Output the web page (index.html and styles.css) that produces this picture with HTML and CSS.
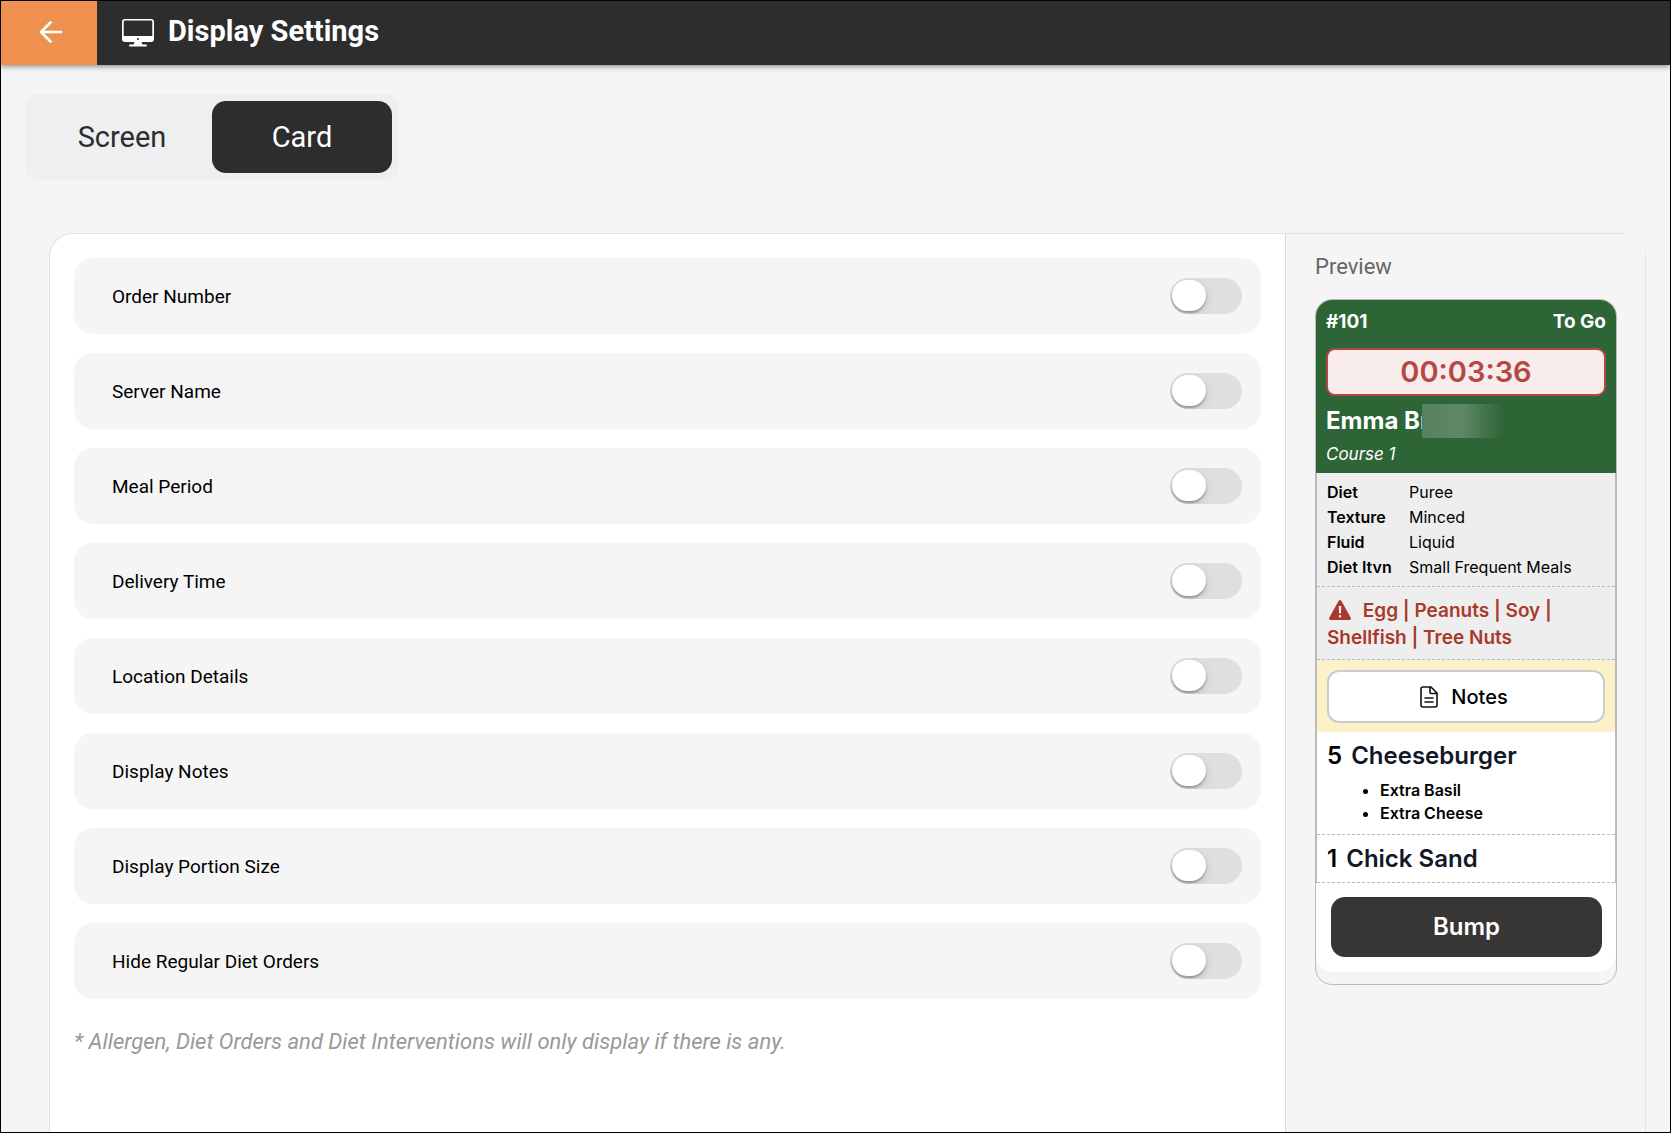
FILE: index.html
```
<!DOCTYPE html>
<html lang="en">
<head>
    <meta charset="UTF-8">
    <meta name="viewport" content="width=device-width, initial-scale=1.0">
    <title>Display Settings</title>
    <link rel="stylesheet" href="styles.css">
</head>
<body>
    <header class="topbar">
        <button type="button" class="back" aria-label="Back">
            <svg width="24" height="22" viewBox="0 0 24 22" fill="none" stroke="#fff" stroke-width="2.600" stroke-linecap="round" stroke-linejoin="round">
                <path d="M22 11H2.500M11.500 1.500L2 11l9.500 9.500"/>
            </svg>
        </button>
        <svg class="monitor" width="32" height="28" viewBox="0 0 32 28">
            <path fill="#fff" fill-rule="evenodd" d="M3 0h26a3 3 0 0 1 3 3v17a3 3 0 0 1-3 3H19.500l1 2.500H24a1 1 0 0 1 0 2H8a1 1 0 0 1 0-2h3.500l1-2.500H3a3 3 0 0 1-3-3V3a3 3 0 0 1 3-3zM3 1.500A1.300 1.300 0 0 0 1.700 3v14h28.600V3A1.300 1.300 0 0 0 29 1.500zM16 19a1 1 0 1 0 0 2 1 1 0 0 0 0-2z"/>
        </svg>
        <h1>Display Settings</h1>
    </header>

    <main>
        <div class="tabs">
            <button type="button" class="tab">Screen</button>
            <button type="button" class="tab active">Card</button>
        </div>

        <div class="panel">
            <section class="settings">
                <label class="setting">Order Number <input type="checkbox" class="toggle"></label>
                <label class="setting">Server Name <input type="checkbox" class="toggle"></label>
                <label class="setting">Meal Period <input type="checkbox" class="toggle"></label>
                <label class="setting">Delivery Time <input type="checkbox" class="toggle"></label>
                <label class="setting">Location Details <input type="checkbox" class="toggle"></label>
                <label class="setting">Display Notes <input type="checkbox" class="toggle"></label>
                <label class="setting">Display Portion Size <input type="checkbox" class="toggle"></label>
                <label class="setting">Hide Regular Diet Orders <input type="checkbox" class="toggle"></label>
                <p class="hint">* Allergen, Diet Orders and Diet Interventions will only display if there is any.</p>
            </section>

            <aside class="preview">
                <h2>Preview</h2>
                <div class="card">
                    <div class="card-head">
                        <div class="order">
                            <span>#101</span>
                            <span>To Go</span>
                        </div>
                        <div class="timer">00:03:36</div>
                        <div class="guest"><span class="guest-name">Emma Br</span></div>
                        <div class="course">Course 1</div>
                    </div>
                    <div class="card-body">
                        <dl class="diet">
                            <dt>Diet</dt><dd>Puree</dd>
                            <dt>Texture</dt><dd>Minced</dd>
                            <dt>Fluid</dt><dd>Liquid</dd>
                            <dt>Diet Itvn</dt><dd>Small Frequent Meals</dd>
                        </dl>
                        <div class="allergens">
                            <svg width="22" height="20" viewBox="0 0 22 20">
                                <path fill="#a83a2c" fill-rule="evenodd" d="M9.700.8a1.500 1.500 0 0 1 2.600 0l9.500 16.900A1.500 1.500 0 0 1 20.500 20h-19a1.500 1.500 0 0 1-1.300-2.300zM9.700 6l.4 7.500h1.800l.4-7.500zM11 15a1.300 1.300 0 1 0 0 2.600 1.300 1.300 0 0 0 0-2.600z"/>
                            </svg>
                            Egg | Peanuts | Soy | Shellfish | Tree Nuts
                        </div>
                        <div class="notes">
                            <button type="button" class="notes-btn">
                                <svg width="18" height="22" viewBox="0 0 18 22" fill="none" stroke="#111" stroke-width="1.600" stroke-linejoin="round" stroke-linecap="round">
                                    <path d="M3 1h8l6 6v12a2 2 0 0 1-2 2H3a2 2 0 0 1-2-2V3a2 2 0 0 1 2-2zM10 1v5.500a1 1 0 0 0 1 1h6M5 12h8M5 16h8"/>
                                </svg>
                                Notes
                            </button>
                        </div>
                        <div class="item">
                            <div class="item-name"><span class="qty">5</span> Cheeseburger</div>
                            <ul>
                                <li>Extra Basil</li>
                                <li>Extra Cheese</li>
                            </ul>
                        </div>
                        <div class="item">
                            <div class="item-name"><span class="qty">1</span> Chick Sand</div>
                        </div>
                    </div>
                    <div class="card-foot">
                        <button type="button" class="bump">Bump</button>
                    </div>
                </div>
            </aside>
        </div>
    </main>
</body>
</html>
```

FILE: styles.css
```
* {
    box-sizing: border-box;
}
body {
    margin: 0;
    height: 100vh;
    display: flex;
    flex-direction: column;
    overflow: hidden;
    border: 1px solid #000;
    background-color: #f5f5f5;
    font-family: Roboto, sans-serif;
    color: #000;
}
button {
    border: none;
    padding: 0;
    font-family: inherit;
    cursor: pointer;
}
h1, h2, p, ul, dl, dd {
    margin: 0;
    padding: 0;
}

/* top bar */
.topbar {
    display: flex;
    align-items: center;
    flex-shrink: 0;
    height: 64px;
    background-color: #2d2d2d;
    color: #fff;
    box-shadow: 0 1px 6px rgba(0, 0, 0, 0.5);
}
.back {
    display: flex;
    align-items: center;
    justify-content: center;
    width: 96px;
    height: 64px;
    padding: 0 0 2px 4px;
    background-color: #f0924f;
}
.monitor {
    margin: 0 14px 0 25px;
}
h1 {
    font-size: 29px;
    line-height: 32px;
    font-weight: 700;
    padding-bottom: 4px;
}

main {
    flex: 1;
    display: flex;
    flex-direction: column;
    padding: 29px 24px 0;
}

/* tabs */
.tabs {
    display: flex;
    align-self: flex-start;
    padding: 7px;
    border-radius: 14px;
    background-color: #eeeff1;
}
.tab {
    width: 180px;
    height: 72px;
    border-radius: 14px;
    background-color: transparent;
    color: #2d2d2d;
    font-size: 29px;
}
.tab.active {
    background-color: #2d2d2d;
    color: #fff;
}

/* settings */
.panel {
    flex: 1;
    display: flex;
    margin: 53px 0 0 24px;
    border: 1px solid #e2e2e2;
    border-bottom: none;
    border-radius: 24px 24px 0 0;
    background-color: #fff;
}
.settings {
    flex: 1;
    display: flex;
    flex-direction: column;
    gap: 19px;
    padding: 24px;
}
.setting {
    display: flex;
    align-items: center;
    justify-content: space-between;
    height: 76px;
    padding: 0 19px 0 38px;
    border-radius: 19px;
    background-color: #f5f5f5;
    font-size: 19px;
}
.toggle {
    appearance: none;
    width: 72px;
    height: 36px;
    margin: 0;
    padding: 2px;
    border-radius: 18px;
    background-color: #dfdfdf;
    overflow: hidden;
    cursor: pointer;
}
.toggle::before {
    content: "";
    display: block;
    width: 34px;
    height: 31px;
    border-radius: 17px;
    background-color: #fff;
    box-shadow: 0 2px 2px rgba(0, 0, 0, 0.25), 0 3px 8px rgba(0, 0, 0, 0.15);
}
.toggle:checked {
    background-color: #2d6536;
}
.toggle:checked::before {
    margin-left: auto;
}
.hint {
    padding-top: 11px;
    color: #999;
    font-size: 22px;
    line-height: 26px;
    font-style: italic;
}

/* preview */
.preview {
    width: 360px;
    padding: 20px 28px 0 29px;
    border-left: 1px solid #dadada;
    background-color: #f5f5f5;
}
h2 {
    color: #666;
    font-size: 22px;
    line-height: 26px;
    font-weight: 400;
    margin-bottom: 19px;
}
.card {
    padding-bottom: 12px;
    border: 1px solid #bbb;
    border-radius: 17px;
    overflow: hidden;
    font-family: Inter, sans-serif;
}
.card-head {
    padding: 10px 10px 7px;
    background-color: #2d6536;
    color: #fff;
}
.order {
    display: flex;
    justify-content: space-between;
    font-size: 19px;
    line-height: 24px;
    font-weight: 700;
}
.timer {
    height: 48px;
    margin-top: 14px;
    border: 2px solid #b54843;
    border-radius: 9px;
    background-color: #f7eceb;
    color: #b54843;
    font-size: 29px;
    line-height: 44px;
    font-weight: 600;
    text-align: center;
}
.guest {
    margin-top: 8px;
    font-size: 24px;
    line-height: 34px;
    font-weight: 700;
}
.guest-name {
    position: relative;
    display: inline-block;
}
.guest-name::after {
    content: "";
    position: absolute;
    top: 0;
    left: 96px;
    width: 81px;
    height: 34px;
    background: linear-gradient(to right, #57815e, #5f8866 50%, #2d6536);
}
.course {
    margin-top: 4px;
    font-size: 17px;
    line-height: 24px;
    font-style: italic;
}
.card-body {
    border: 1px solid #bbb;
    border-width: 0 1px;
    background-color: #fff;
}
.diet {
    display: grid;
    grid-template-columns: 82px 1fr;
    padding: 7px 10px 6px;
    border-bottom: 1px dashed #b0bcc4;
    background-color: #eee;
    font-size: 16px;
    line-height: 25px;
}
.diet dt {
    font-weight: 600;
}
.allergens {
    padding: 10px 10px 8px;
    border-bottom: 1px dashed #b0bcc4;
    background-color: #eee;
    color: #a83a2c;
    font-size: 19px;
    line-height: 27px;
    font-weight: 600;
}
.allergens svg {
    margin: 0 7px 0 2px;
    vertical-align: -3px;
}
.notes {
    padding: 10px 10px 9px;
    background-color: #fcf1c9;
}
.notes-btn {
    display: flex;
    align-items: center;
    justify-content: center;
    gap: 13px;
    width: 100%;
    height: 53px;
    padding-right: 4px;
    border: 2px solid #ccc;
    border-radius: 12px;
    background-color: #fff;
    color: #000;
    font-size: 20px;
    font-weight: 500;
}
.item {
    padding: 8px 10px 7px;
    border-bottom: 1px dashed #b0bcc4;
}
.item-name {
    color: #111827;
    font-size: 24px;
    line-height: 32px;
    font-weight: 600;
}
.qty {
    color: #000;
    margin-right: 3px;
}
.item ul {
    padding: 7px 0 2px 53px;
    font-size: 16px;
    line-height: 23px;
    font-weight: 600;
}
.card-foot {
    padding: 14px 14px 15px 15px;
    border-radius: 0 0 17px 17px;
    background-color: #fff;
}
.bump {
    width: 100%;
    height: 60px;
    padding-bottom: 2px;
    border-radius: 14px;
    background-color: #383535;
    color: #fff;
    font-size: 24px;
    font-weight: 600;
}
```
